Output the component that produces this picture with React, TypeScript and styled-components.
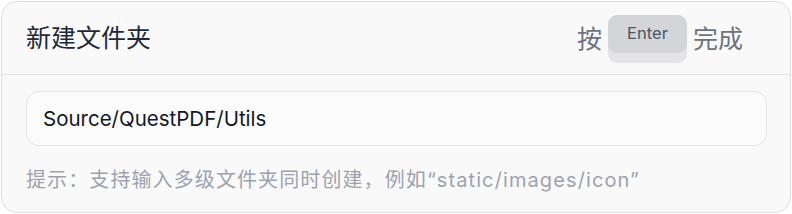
import React from "react";
import styled, { createGlobalStyle } from "styled-components";

const Global = createGlobalStyle`
  html, body { margin: 0; padding: 0; background: #ffffff; }
  body { font-family: Inter, "Noto Sans CJK SC", sans-serif; }
  * { box-sizing: border-box; }
`;

const Card = styled.div`
  margin: 1px;
  width: 790px;
  height: 212px;
  background: #f9f9f9;
  border: 1px solid #dedede;
  border-radius: 16px;
  display: flex;
  flex-direction: column;
  overflow: hidden;
`;

const Header = styled.div`
  height: 73px;
  flex: none;
  display: flex;
  align-items: center;
  justify-content: space-between;
  padding: 0 47px 0 24px;
  border-bottom: 1px solid #e3e3e3;
`;

const Title = styled.div`
  font-size: 25px;
  color: #1f2937;
  line-height: 1;
`;

const Shortcut = styled.div`
  display: flex;
  align-items: center;
  gap: 6px;
  font-size: 25px;
  color: #6b7280;
  line-height: 1;
  padding-top: 2px;
`;

const Kbd = styled.kbd`
  font-family: Inter, "Noto Sans CJK SC", sans-serif;
  width: 79px;
  height: 38px;
  margin-top: -10px;
  display: flex;
  align-items: center;
  justify-content: center;
  background: #d4d5d9;
  border-radius: 9px;
  box-shadow: 0 10px 0 #e4e4e7;
  font-size: 16.5px;
  color: #4b5563;
  padding-bottom: 1px;
`;

const Body = styled.div`
  display: flex;
  flex-direction: column;
  padding: 16px 23px 0 24px;
  gap: 19px;
`;

const Field = styled.div`
  height: 55px;
  border: 1px solid #e3e4e7;
  border-radius: 13px;
  background: #fbfbfb;
  display: flex;
  align-items: center;
  padding: 0 16px;
  font-size: 20.5px;
  color: #111827;
`;

const Hint = styled.div`
  font-size: 20px;
  line-height: 30px;
  color: #9ca3af;
  letter-spacing: 1.1px;
`;

export default function App() {
  return (
    <>
      <Global />
      <Card>
        <Header>
          <Title>新建文件夹</Title>
          <Shortcut>
            <span>按</span>
            <Kbd>Enter</Kbd>
            <span>完成</span>
          </Shortcut>
        </Header>
        <Body>
          <Field>Source/QuestPDF/Utils</Field>
          <Hint>提示：支持输入多级文件夹同时创建，例如“static/images/icon”</Hint>
        </Body>
      </Card>
    </>
  );
}
